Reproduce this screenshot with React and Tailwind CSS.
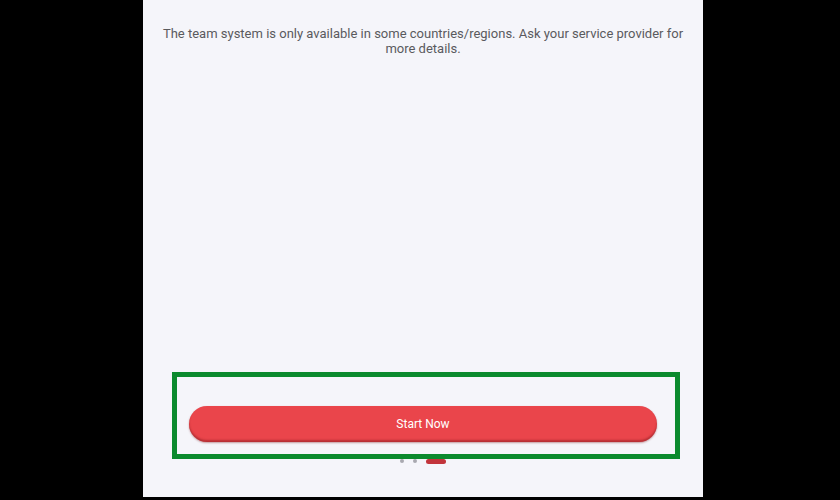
export default function App() {
  return (
    <div className="w-[840px] h-[500px] bg-black flex" style={{ fontFamily: 'Roboto, "Noto Sans", sans-serif' }}>
      <div className="ml-[143px] w-[560px] h-[497px] bg-[#f5f5fa] flex flex-col">
        <p className="mt-[26px] px-[14px] text-center text-[13px] leading-[15px] text-[#5a5a5e]">
          The team system is only available in some countries/regions. Ask your service provider for more details.
        </p>
        <div className="flex-1" />
        <div className="ml-[29px] w-[508px] h-[87px] border-[5px] border-[#0b8a2e] pt-[29px] pl-[12px] pr-[18px]">
          <div className="h-[36px] rounded-full bg-[#ea454b] shadow-[inset_0_-2px_2px_rgba(120,20,25,0.45),0_1px_2px_rgba(120,20,25,0.4)] flex items-center justify-center">
            <span className="text-white text-[12px]">Start Now</span>
          </div>
        </div>
        <div className="h-[4px] flex items-center justify-center gap-[9px] mr-[1px]">
          <div className="w-[4px] h-[4px] rounded-full bg-[#a9a9b0]" />
          <div className="w-[4px] h-[4px] rounded-full bg-[#a9a9b0]" />
          <div className="w-[20px] h-[5px] rounded-full bg-[#c2343b]" />
        </div>
        <div className="h-[34px]" />
      </div>
    </div>
  );
}
